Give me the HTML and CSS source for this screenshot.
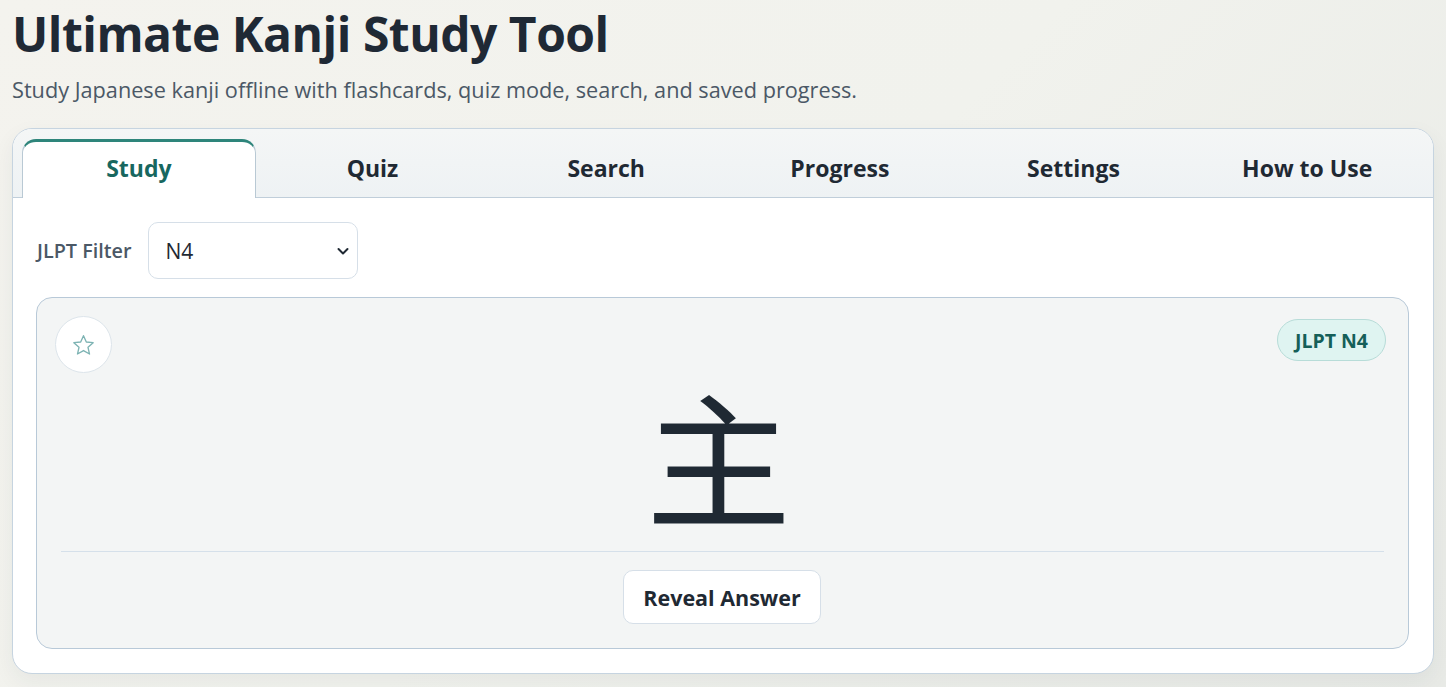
FILE: index.html
```html
<!DOCTYPE html>
<html lang="en">
<head>
    <meta charset="UTF-8">
    <meta name="viewport" content="width=device-width, initial-scale=1.0">
    <title>Ultimate Kanji Study Tool</title>
    <link rel="stylesheet" href="styles.css">
</head>
<body>
    <header class="page-header">
        <h1>Ultimate Kanji Study Tool</h1>
        <p class="subtitle">Study Japanese kanji offline with flashcards, quiz mode, search, and saved progress.</p>
    </header>

    <main class="app">
        <nav class="tabs">
            <button class="tab active">Study</button>
            <button class="tab">Quiz</button>
            <button class="tab">Search</button>
            <button class="tab">Progress</button>
            <button class="tab">Settings</button>
            <button class="tab">How to Use</button>
        </nav>

        <section class="panel">
            <div class="filter-row">
                <label for="jlptFilter" class="filter-label">JLPT Filter</label>
                <div class="select-wrap">
                    <select id="jlptFilter" class="filter-select">
                        <option>All</option>
                        <option>N5</option>
                        <option selected>N4</option>
                        <option>N3</option>
                        <option>N2</option>
                        <option>N1</option>
                    </select>
                    <svg class="select-arrow" width="14" height="14" viewBox="0 0 14 14">
                        <path d="M2.5 5l4.5 4.5L11.5 5" fill="none" stroke="#1f2933" stroke-width="2" stroke-linecap="round" stroke-linejoin="round"/>
                    </svg>
                </div>
            </div>

            <div class="flashcard">
                <div class="card-top">
                    <button class="star-button" title="Mark as favourite">
                        <svg width="23" height="22" viewBox="0 0 24 23">
                            <path d="M12 1.8l2.95 6.6 7.15.7-5.4 4.8 1.6 7.05L12 17.3l-6.3 3.65 1.6-7.05-5.4-4.8 7.15-.7z" fill="none" stroke="#7db3b3" stroke-width="1.4" stroke-linejoin="round"/>
                        </svg>
                    </button>
                    <span class="level-badge">JLPT N4</span>
                </div>

                <div class="kanji">主</div>

                <div class="card-actions">
                    <button class="reveal-button">Reveal Answer</button>
                </div>
            </div>
        </section>
    </main>
</body>
</html>
```

FILE: styles.css
```css
* {
    margin: 0;
    padding: 0;
    box-sizing: border-box;
}

body {
    font-family: "Open Sans", "Noto Sans", sans-serif;
    background: linear-gradient(135deg, #f4f3ee 0%, #f1f2ed 50%, #e8eae6 100%);
    color: #1f2933;
    min-height: 100vh;
    padding: 0 12px;
}

.page-header {
    padding-top: 4px;
}

h1 {
    font-size: 48px;
    font-weight: 700;
    line-height: 60px;
    color: #1f2935;
    letter-spacing: -0.5px;
}

.subtitle {
    margin-top: 12px;
    font-size: 21.7px;
    line-height: 28px;
    color: #4b5866;
}

.app {
    margin-top: 24px;
    background: #fff;
    border: 1px solid #c6d4e0;
    border-radius: 20px;
    overflow: hidden;
    box-shadow: 0 8px 22px rgba(40, 50, 60, 0.06);
}

.tabs {
    display: grid;
    grid-template-columns: repeat(6, 1fr);
    padding: 10px 9px 0;
    background: linear-gradient(180deg, #f4f6f6 0%, #eef2f4 100%);
    border-bottom: 1px solid #c0ceda;
}

.tab {
    height: 58px;
    padding-bottom: 3px;
    background: none;
    border: 1px solid transparent;
    border-top-width: 3px;
    border-bottom: none;
    border-radius: 14px 14px 0 0;
    font-family: inherit;
    font-size: 23px;
    font-weight: 700;
    color: #1f2933;
    cursor: pointer;
}

.tab.active {
    background: #fff;
    border-color: #b9c9d4;
    border-top-color: #2e857b;
    color: #17675f;
    margin-bottom: -1px;
    height: 59px;
    padding-bottom: 5px;
}

.panel {
    padding: 24px 24px 24px 23px;
}

.filter-row {
    display: flex;
    align-items: center;
    gap: 17px;
}

.filter-label {
    font-size: 19.8px;
    font-weight: 600;
    color: #4b5866;
    padding-left: 1px;
}

.select-wrap {
    position: relative;
}

.filter-select {
    appearance: none;
    width: 210px;
    height: 57px;
    padding: 0 16px;
    font-family: inherit;
    font-size: 21px;
    color: #1f2933;
    background: #fff;
    border: 1px solid #d6dfe8;
    border-radius: 10px;
}

.select-arrow {
    position: absolute;
    right: 8px;
    top: 22px;
    pointer-events: none;
}

.flashcard {
    margin-top: 18px;
    background: #f3f5f5;
    border: 1px solid #b8c9d8;
    border-radius: 16px;
    padding: 18px 24px 24px;
}

.card-top {
    display: flex;
    justify-content: space-between;
    align-items: flex-start;
}

.star-button {
    width: 57px;
    height: 57px;
    margin-left: -6px;
    border-radius: 50%;
    background: #fff;
    border: 1px solid #dde5eb;
    display: flex;
    align-items: center;
    justify-content: center;
    cursor: pointer;
}

.level-badge {
    height: 42px;
    margin-top: 3px;
    padding: 0 17px;
    display: flex;
    align-items: center;
    border-radius: 21px;
    background: #dff4f1;
    border: 1px solid #b7dcd8;
    color: #155f59;
    font-size: 19.5px;
    font-weight: 700;
    margin-right: -2px;
}

.kanji {
    margin-top: 9px;
    padding: 0 8px 24px 0;
    text-align: center;
    font-family: "Noto Sans CJK JP", sans-serif;
    font-size: 145px;
    line-height: 145px;
    color: #1f2933;
    border-bottom: 1px solid #d5e0ea;
}

.card-actions {
    display: flex;
    justify-content: center;
    padding-top: 18px;
}

.reveal-button {
    width: 198px;
    height: 54px;
    margin-right: 1px;
    background: #fff;
    border: 1px solid #d6dfe8;
    border-radius: 10px;
    font-family: inherit;
    font-size: 21.5px;
    font-weight: 700;
    color: #1f2933;
    cursor: pointer;
}
```
